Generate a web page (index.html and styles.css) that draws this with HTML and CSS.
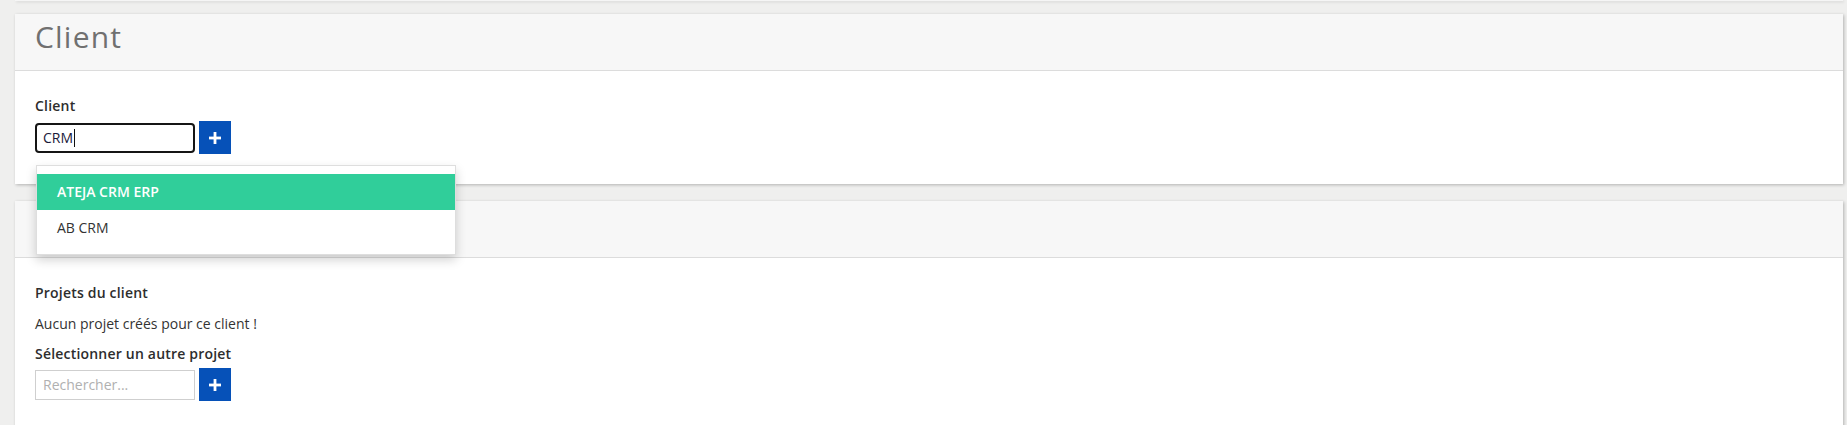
FILE: index.html
```html
<!DOCTYPE html>
<html lang="fr">
<head>
<meta charset="utf-8">
<title>Client</title>
<link rel="stylesheet" href="styles.css">
</head>
<body>
<main class="page">
  <div class="panel-stub"></div>
  <section class="panel">
    <header class="panel-head"><h1 class="panel-title">Client</h1></header>
    <div class="panel-body">
      <div class="field-label">Client</div>
      <div class="field-row">
        <div class="combo">
          <div class="text-input is-focused"><span class="value">CRM</span><span class="caret"></span></div>
          <ul class="dropdown">
            <li class="dropdown-item is-active">ATEJA CRM ERP</li>
            <li class="dropdown-item">AB CRM</li>
          </ul>
        </div>
        <button class="add-btn" type="button" aria-label="Ajouter">
          <svg width="12" height="12" viewBox="0 0 12 12"><rect x="4.6" y="0" width="2.8" height="12" fill="#fff"/><rect x="0" y="4.6" width="12" height="2.8" fill="#fff"/></svg>
        </button>
      </div>
    </div>
  </section>
  <section class="panel">
    <header class="panel-head"></header>
    <div class="panel-body">
      <div class="field-label">Projets du client</div>
      <p class="note">Aucun projet créés pour ce client !</p>
      <div class="field-label">Sélectionner un autre projet</div>
      <div class="field-row field-row--tight">
        <div class="combo">
          <div class="text-input"><span class="placeholder">Rechercher...</span></div>
        </div>
        <button class="add-btn" type="button" aria-label="Ajouter">
          <svg width="12" height="12" viewBox="0 0 12 12"><rect x="4.6" y="0" width="2.8" height="12" fill="#fff"/><rect x="0" y="4.6" width="12" height="2.8" fill="#fff"/></svg>
        </button>
      </div>
    </div>
  </section>
</main>
</body>
</html>
```
FILE: styles.css
```css
* { box-sizing: border-box; }
html, body { margin: 0; height: 100%; }
body {
  background: #efefee;
  font-family: "Open Sans", "Liberation Sans", sans-serif;
  color: #333;
  overflow: hidden;
}
.page {
  display: flex;
  flex-direction: column;
  gap: 17px;
  padding: 0 4px 0 15px;
}
.panel-stub {
  height: 1px;
  margin-bottom: -4px;
  background: #f5f5f5;
  box-shadow: 1px 1px 3px rgba(0,0,0,0.18);
}
.panel {
  background: #fff;
  box-shadow: 1px 1px 3px rgba(0,0,0,0.25);
}
.panel-head {
  height: 57px;
  background: #f7f7f7;
  border-bottom: 1px solid #dcdcdc;
  padding: 0 20px;
}
.panel-title {
  margin: 0;
  font-weight: 400;
  font-size: 30px;
  letter-spacing: 1.2px;
  line-height: 44px;
  padding-top: 1px;
  color: #707070;
}
.panel-body {
  padding: 25px 20px 30px;
}
.field-label {
  font-size: 14px;
  font-weight: 600;
  letter-spacing: 0.2px;
  line-height: 20px;
  color: #2d2d2d;
}
.note {
  margin: 11px 0 10px;
  font-size: 14px;
  line-height: 20px;
  color: #333;
}
.field-row {
  display: flex;
  align-items: center;
  gap: 4px;
  margin-top: 5px;
}
.field-row--tight { margin-top: 4px; }
.combo { position: relative; }
.text-input {
  width: 160px;
  height: 30px;
  border: 1px solid #cfcfcf;
  display: flex;
  align-items: center;
  padding: 0 7px;
  font-size: 14px;
  background: #fff;
}
.text-input.is-focused {
  border: 2px solid #151515;
  border-radius: 4px;
  padding: 0 6px;
  color: #1a1a3a;
}
.caret {
  display: inline-block;
  width: 1px;
  height: 18px;
  background: #111;
  margin-left: 1px;
}
.placeholder { color: #b0b0b0; }
.add-btn {
  width: 32px;
  height: 33px;
  border: 0;
  padding: 0;
  background: #0651b8;
  display: flex;
  align-items: center;
  justify-content: center;
}
.dropdown {
  position: absolute;
  left: 1px;
  top: 42px;
  width: 420px;
  margin: 0;
  padding: 8px 0 8px;
  list-style: none;
  background: #fff;
  border: 1px solid #dedede;
  box-shadow: 0 5px 10px rgba(0,0,0,0.18);
  z-index: 10;
}
.dropdown-item {
  height: 36px;
  line-height: 36px;
  padding: 0 20px;
  font-size: 14px;
  color: #333;
}
.dropdown-item.is-active {
  background: #30ce9a;
  color: #fff;
  font-weight: 600;
}
```
